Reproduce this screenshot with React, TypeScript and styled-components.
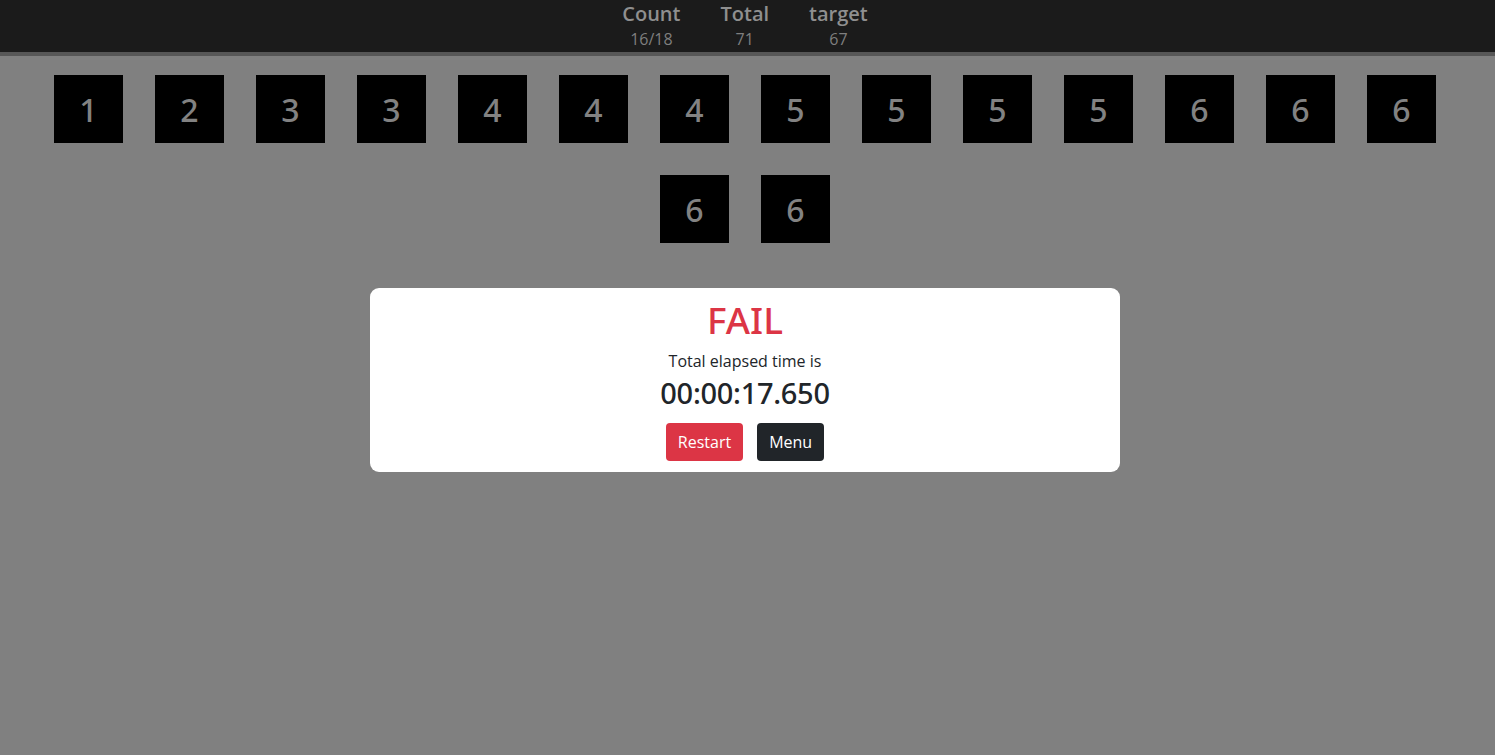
import styled, { createGlobalStyle } from 'styled-components'

const GlobalStyle = createGlobalStyle`
  html, body {
    margin: 0;
    padding: 0;
    background: #808080;
    font-family: "Open Sans", "Noto Sans", sans-serif;
  }
`

const Page = styled.div`
  min-height: 755px;
  background: #808080;
  display: flex;
  flex-direction: column;
`

const Header = styled.header`
  height: 52px;
  background: #1b1b1b;
  border-bottom: 4px solid #575757;
  display: flex;
  justify-content: center;
  align-items: flex-start;
  gap: 40px;
  padding-right: 5px;
`

const Stat = styled.div`
  display: flex;
  flex-direction: column;
  align-items: center;
  color: #8f8f8f;
`

const StatLabel = styled.div`
  font-size: 20px;
  font-weight: 600;
  line-height: 28px;
`

const StatValue = styled.div`
  font-size: 16px;
  line-height: 22px;
  color: #7f7f7f;
`

const Board = styled.div`
  display: flex;
  flex-wrap: wrap;
  justify-content: center;
  padding: 3px 5px 0 0;
`

const Tile = styled.div`
  width: 69px;
  height: 68px;
  margin: 16px;
  background: #000;
  color: #828282;
  font-family: "Noto Sans", "Open Sans", sans-serif;
  font-size: 32px;
  font-weight: 500;
  display: flex;
  align-items: center;
  justify-content: center;
`

const ModalWrap = styled.div`
  display: flex;
  justify-content: center;
  padding: 29px 5px 0 0;
`

const Modal = styled.div`
  width: 750px;
  height: 184px;
  box-sizing: border-box;
  background: #fff;
  border-radius: 9px;
  display: flex;
  flex-direction: column;
  align-items: center;
  padding-top: 8px;
`

const Title = styled.h1`
  margin: 0;
  font-family: "Noto Sans", "Open Sans", sans-serif;
  font-size: 37px;
  font-weight: 500;
  color: #dc3545;
  line-height: 48px;
`

const Caption = styled.div`
  font-size: 16px;
  color: #212529;
  line-height: 24px;
  margin-top: 5px;
`

const Time = styled.div`
  font-family: "Noto Sans", "Open Sans", sans-serif;
  font-size: 29px;
  font-weight: 500;
  color: #212529;
  line-height: 40px;
  letter-spacing: -0.3px;
`

const Buttons = styled.div`
  display: flex;
  gap: 14px;
  margin-top: 10px;
`

const Button = styled.button<{ $variant: 'danger' | 'dark' }>`
  height: 38px;
  padding: 0 12px;
  border: none;
  border-radius: 4px;
  font-family: inherit;
  font-size: 16px;
  color: #fff;
  background: ${p => (p.$variant === 'danger' ? '#dc3545' : '#212529')};
  cursor: pointer;
`

const tiles = [1, 2, 3, 3, 4, 4, 4, 5, 5, 5, 5, 6, 6, 6, 6, 6]

const stats = [
  { label: 'Count', value: '16/18' },
  { label: 'Total', value: '71' },
  { label: 'target', value: '67' },
]

export default function App() {
  return (
    <Page>
      <GlobalStyle />
      <Header>
        {stats.map(s => (
          <Stat key={s.label}>
            <StatLabel>{s.label}</StatLabel>
            <StatValue>{s.value}</StatValue>
          </Stat>
        ))}
      </Header>
      <Board>
        {tiles.map((n, i) => (
          <Tile key={i}>{n}</Tile>
        ))}
      </Board>
      <ModalWrap>
        <Modal>
          <Title>FAIL</Title>
          <Caption>Total elapsed time is</Caption>
          <Time>00:00:17.650</Time>
          <Buttons>
            <Button $variant="danger">Restart</Button>
            <Button $variant="dark">Menu</Button>
          </Buttons>
        </Modal>
      </ModalWrap>
    </Page>
  )
}
